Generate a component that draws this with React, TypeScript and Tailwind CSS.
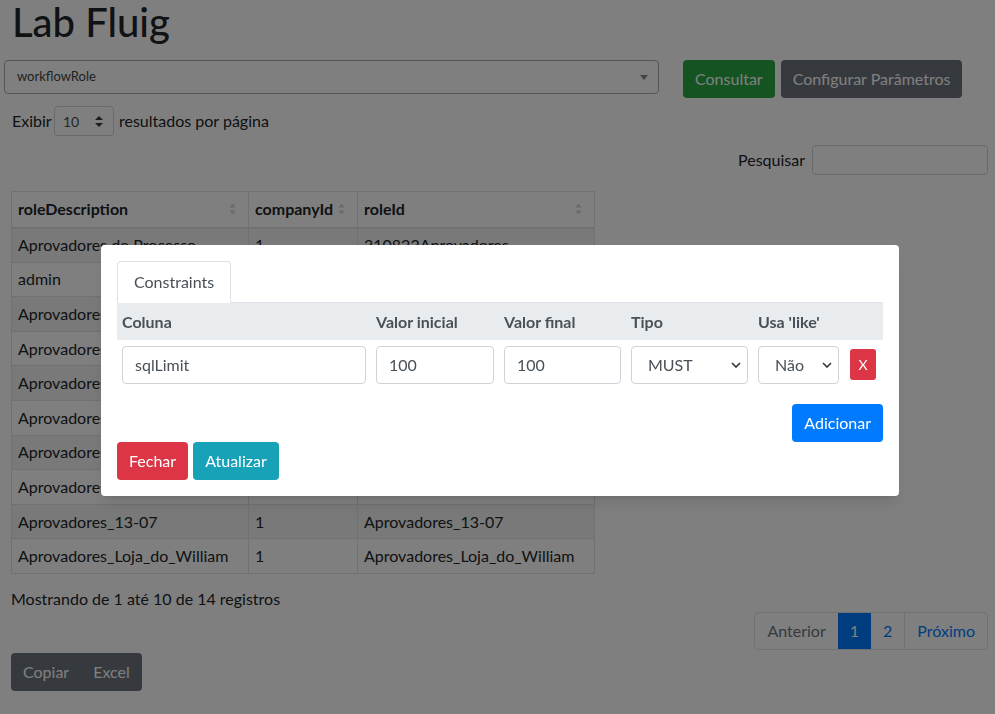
const rows = [
  ["Aprovadores do Processo", "1", "310822Aprovadores"],
  ["admin", "1", "admin"],
  ["Aprovadores_Compras", "1", "Aprovadores_Compras"],
  ["Aprovadores_Financeiro", "1", "Aprovadores_Financeiro"],
  ["Aprovadores_RH", "1", "Aprovadores_RH"],
  ["Aprovadores_TI", "1", "Aprovadores_TI"],
  ["Aprovadores_Vendas", "1", "Aprovadores_Vendas"],
  ["Aprovadores_Diretoria", "1", "Aprovadores_Diretoria"],
  ["Aprovadores_13-07", "1", "Aprovadores_13-07"],
  ["Aprovadores_Loja_do_William", "1", "Aprovadores_Loja_do_William"],
];

const SortIcon = () => (
  <svg width="7" height="12" viewBox="0 0 7 12" className="shrink-0">
    <path d="M3.5 0.5 L6.5 4.5 L0.5 4.5 Z" fill="#d4d4d4" />
    <path d="M3.5 11.5 L6.5 7.5 L0.5 7.5 Z" fill="#d4d4d4" />
  </svg>
);

const Chevron = () => (
  <svg width="10" height="6" viewBox="0 0 10 6" className="shrink-0">
    <path d="M1 1 L5 5 L9 1" fill="none" stroke="#333" strokeWidth="1.6" />
  </svg>
);

export default function App() {
  return (
    <div className="relative min-h-screen bg-white font-['Segoe_UI',Lato,sans-serif] text-[16px] text-[#212529]">
      <h1 className="ml-[12px] text-[40px] leading-[44px] font-medium">Lab Fluig</h1>

      <div className="mt-[16px] flex items-start">
        <div className="ml-[4px] w-[655px] h-[34px] border border-[#aaa] rounded-[4px] flex items-center justify-between pl-[12px] pr-[10px] text-[13px] text-[#444]">
          <span>workflowRole</span>
          <span className="border-t-[5px] border-x-[4px] border-x-transparent border-t-[#888]" />
        </div>
        <button className="ml-[24px] h-[38px] px-3 rounded-[4px] bg-[#28a745] text-white">Consultar</button>
        <button className="ml-[6px] h-[38px] px-3 rounded-[4px] bg-[#6c757d] text-white">Configurar Parâmetros</button>
      </div>

      <div className="mt-[8px] ml-[12px] flex items-center">
        <span className="w-[42px]">Exibir</span>
        <div className="w-[60px] h-[30px] border border-[#ced4da] rounded-[4px] flex items-center justify-between pl-[8px] pr-[10px] text-[14px] text-[#495057]">
          <span>10</span>
          <svg width="8" height="11" viewBox="0 0 8 11">
            <path d="M4 0 L8 4 L0 4 Z" fill="#343a40" />
            <path d="M4 11 L8 7 L0 7 Z" fill="#343a40" />
          </svg>
        </div>
        <span className="ml-[5px]">resultados por página</span>
      </div>

      <div className="mt-[9px] pr-[7px] flex justify-end items-center gap-[7px]">
        <span>Pesquisar</span>
        <div className="w-[176px] h-[30px] border border-[#ced4da] rounded-[4px]" />
      </div>

      <table className="mt-[16px] ml-[11px] w-[583px] border-collapse table-fixed">
        <colgroup>
          <col className="w-[237px]" />
          <col className="w-[109px]" />
          <col className="w-[237px]" />
        </colgroup>
        <thead>
          <tr className="h-[36px]">
            {["roleDescription", "companyId", "roleId"].map((h) => (
              <th key={h} className="border border-[#dee2e6] border-b-2 px-[6px] text-left font-bold">
                <div className="flex items-center justify-between">
                  <span>{h}</span>
                  <span className="pr-[6px]"><SortIcon /></span>
                </div>
              </th>
            ))}
          </tr>
        </thead>
        <tbody>
          {rows.map((r, i) => (
            <tr key={i} className={i % 2 === 0 ? "h-[34.6px] bg-black/5" : "h-[34.6px]"}>
              {r.map((c, j) => (
                <td key={j} className="border border-[#dee2e6] px-[6px] whitespace-nowrap overflow-hidden">
                  {c}
                </td>
              ))}
            </tr>
          ))}
        </tbody>
      </table>

      <div className="mt-[13px] ml-[11px] leading-[24px]">Mostrando de 1 até 10 de 14 registros</div>

      <div className="mt-[1px] pr-[7px] flex justify-end">
        <div className="flex h-[38px] border border-[#dee2e6] rounded-[4px] overflow-hidden">
          <span className="px-3 flex items-center text-[#6c757d]">Anterior</span>
          <span className="px-3 flex items-center bg-[#007bff] text-white">1</span>
          <span className="px-3 flex items-center text-[#007bff]">2</span>
          <span className="px-3 flex items-center border-l border-[#dee2e6] text-[#007bff]">Próximo</span>
        </div>
      </div>

      <div className="mt-[3px] ml-[11px] flex">
        <div className="flex h-[38px] rounded-[4px] bg-[#6c757d] text-white overflow-hidden">
          <span className="px-3 flex items-center">Copiar</span>
          <span className="px-3 flex items-center">Excel</span>
        </div>
      </div>

      <div className="fixed inset-0 bg-black/50">
        <div className="absolute left-[101px] top-[245px] w-[798px] bg-white rounded-[4px] p-4 shadow-lg">
          <div className="flex border-b border-[#dee2e6]">
            <div className="-mb-px px-4 py-2 border border-[#dee2e6] border-b-white rounded-t-[4px] bg-white text-[#495057]">
              Constraints
            </div>
          </div>

          <div className="grid grid-cols-[254px_128px_127px_127px_91px_39px]">
            {["Coluna", "Valor inicial", "Valor final", "Tipo", "Usa 'like'", ""].map((h, i) => (
              <div key={i} className="h-[37px] bg-[#e9ecef] px-[5px] flex items-center font-bold text-[#495057]">
                {h}
              </div>
            ))}
            <div className="px-[5px] pt-[6px] pb-[5px]">
              <div className="h-[38px] border border-[#ced4da] rounded-[4px] px-3 flex items-center text-[#495057]">sqlLimit</div>
            </div>
            <div className="px-[5px] pt-[6px] pb-[5px]">
              <div className="h-[38px] border border-[#ced4da] rounded-[4px] px-3 flex items-center text-[#495057]">100</div>
            </div>
            <div className="px-[5px] pt-[6px] pb-[5px]">
              <div className="h-[38px] border border-[#ced4da] rounded-[4px] px-3 flex items-center text-[#495057]">100</div>
            </div>
            <div className="px-[5px] pt-[6px] pb-[5px]">
              <div className="h-[38px] border border-[#ced4da] rounded-[4px] pl-[16px] pr-[6px] flex items-center justify-between text-[#495057]">
                <span>MUST</span>
                <Chevron />
              </div>
            </div>
            <div className="px-[5px] pt-[6px] pb-[5px]">
              <div className="h-[38px] border border-[#ced4da] rounded-[4px] pl-[16px] pr-[6px] flex items-center justify-between text-[#495057]">
                <span>Não</span>
                <Chevron />
              </div>
            </div>
            <div className="pl-[6px] pt-[9px]">
              <button className="w-[26px] h-[31px] rounded-[3px] bg-[#dc3545] text-white text-[14px]">X</button>
            </div>
          </div>

          <div className="mt-[15px] flex justify-end">
            <button className="h-[38px] px-3 rounded-[4px] bg-[#007bff] text-white">Adicionar</button>
          </div>
          <div className="flex gap-[5px]">
            <button className="h-[38px] px-3 rounded-[4px] bg-[#dc3545] text-white">Fechar</button>
            <button className="h-[38px] px-3 rounded-[4px] bg-[#17a2b8] text-white">Atualizar</button>
          </div>
        </div>
      </div>
    </div>
  );
}
